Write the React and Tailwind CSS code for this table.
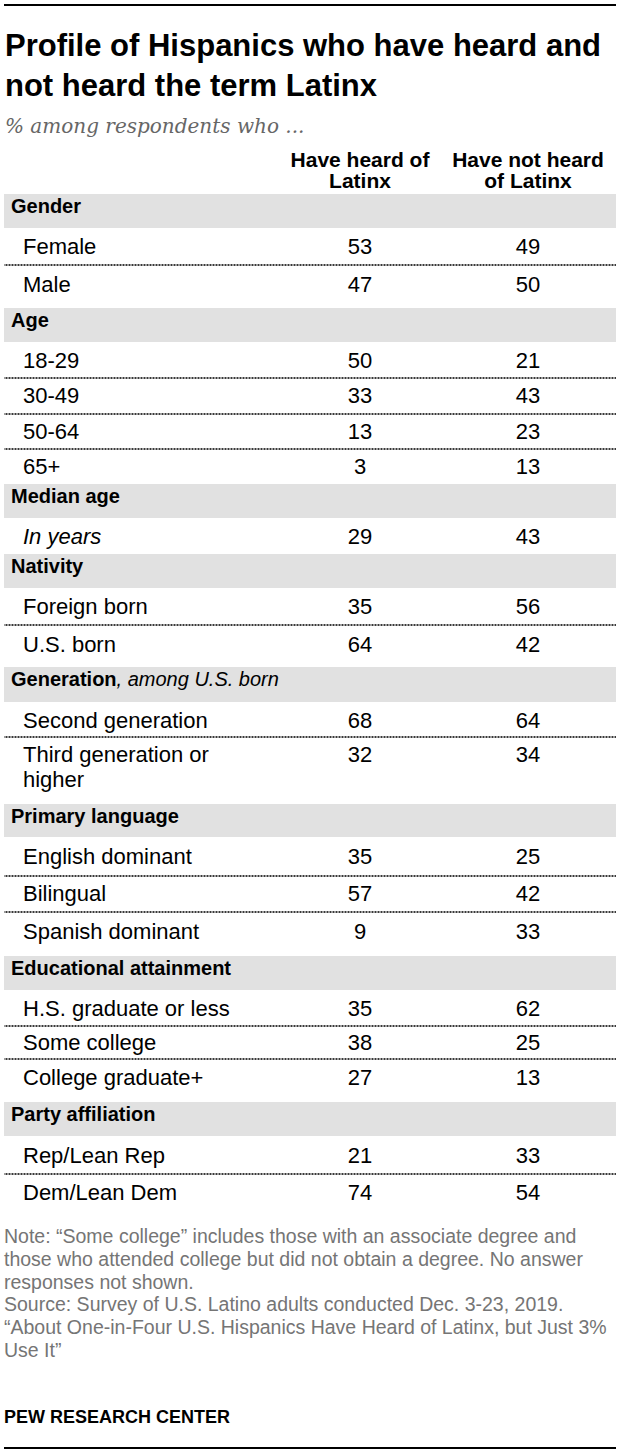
import React from 'react';

const dots =
  'bg-[linear-gradient(to_right,#3a3a3a_67%,transparent_67%)] bg-[length:3px_2px] bg-repeat-x bg-top';

// h = row height class, pt = top padding class, dotted = separator above
const sections = [
  {
    title: 'Gender',
    h: 'h-[34px]',
    rows: [
      { label: 'Female', a: 53, b: 49, h: 'h-[36px]', pt: 'pt-[6px]' },
      { label: 'Male', a: 47, b: 50, h: 'h-[44px]', pt: 'pt-[8px]', dotted: true },
    ],
  },
  {
    title: 'Age',
    h: 'h-[34px]',
    rows: [
      { label: '18-29', a: 50, b: 21, h: 'h-[35px]', pt: 'pt-[6px]' },
      { label: '30-49', a: 33, b: 43, h: 'h-[36px]', pt: 'pt-[6px]', dotted: true },
      { label: '50-64', a: 13, b: 23, h: 'h-[35px]', pt: 'pt-[6px]', dotted: true },
      { label: '65+', a: 3, b: 13, h: 'h-[36px]', pt: 'pt-[6px]', dotted: true },
    ],
  },
  {
    title: 'Median age',
    h: 'h-[34px]',
    rows: [{ label: 'In years', a: 29, b: 43, h: 'h-[36px]', pt: 'pt-[6px]', italic: true }],
  },
  {
    title: 'Nativity',
    h: 'h-[34px]',
    rows: [
      { label: 'Foreign born', a: 35, b: 56, h: 'h-[36px]', pt: 'pt-[6px]' },
      { label: 'U.S. born', a: 64, b: 42, h: 'h-[43px]', pt: 'pt-[8px]', dotted: true },
    ],
  },
  {
    title: 'Generation',
    note: ', among U.S. born',
    h: 'h-[35px]',
    rows: [
      { label: 'Second generation', a: 68, b: 64, h: 'h-[34px]', pt: 'pt-[6px]' },
      { label: 'Third generation or higher', a: 32, b: 34, h: 'h-[68px]', pt: 'pt-[6px]', dotted: true },
    ],
  },
  {
    title: 'Primary language',
    h: 'h-[33px]',
    rows: [
      { label: 'English dominant', a: 35, b: 25, h: 'h-[38px]', pt: 'pt-[7px]' },
      { label: 'Bilingual', a: 57, b: 42, h: 'h-[36px]', pt: 'pt-[6px]', dotted: true },
      { label: 'Spanish dominant', a: 9, b: 33, h: 'h-[45px]', pt: 'pt-[8px]', dotted: true },
    ],
  },
  {
    title: 'Educational attainment',
    h: 'h-[34px]',
    rows: [
      { label: 'H.S. graduate or less', a: 35, b: 62, h: 'h-[35px]', pt: 'pt-[6px]' },
      { label: 'Some college', a: 38, b: 25, h: 'h-[33px]', pt: 'pt-[5px]', dotted: true },
      { label: 'College graduate+', a: 27, b: 13, h: 'h-[44px]', pt: 'pt-[7px]', dotted: true },
    ],
  },
  {
    title: 'Party affiliation',
    h: 'h-[34px]',
    rows: [
      { label: 'Rep/Lean Rep', a: 21, b: 33, h: 'h-[37px]', pt: 'pt-[7px]' },
      { label: 'Dem/Lean Dem', a: 74, b: 54, h: 'h-[36px]', pt: 'pt-[7px]', dotted: true },
    ],
  },
];

function Row({ row }) {
  return (
    <div
      className={`grid grid-cols-[1fr_120px_120px] gap-x-[48px] pr-[28px] items-start text-[22px] leading-[25px] text-black ${row.h} ${row.pt} ${row.dotted ? dots : ''}`}
    >
      <div className={`pl-[19px] ${row.italic ? 'italic' : ''}`}>{row.label}</div>
      <div className="text-center">{row.a}</div>
      <div className="text-center">{row.b}</div>
    </div>
  );
}

export default function App() {
  return (
    <div className="w-[620px] bg-white px-[4px] pt-[4px] font-['Liberation_Sans',Arial,sans-serif] text-black">
      <div className="h-[2px] bg-black" />

      <h1 className="mt-[20px] pl-[1px] text-[31px] leading-[40px] font-bold">
        Profile of Hispanics who have heard and not heard the term Latinx
      </h1>
      <p className="mt-[8px] pl-[1px] font-['DejaVu_Serif',Georgia,serif] italic text-[20px] leading-[24px] text-[#666]">
        % among respondents who ...
      </p>

      <div className="mt-[11px] grid grid-cols-[1fr_120px_120px] gap-x-[48px] pr-[28px] text-[21px] leading-[21px] font-bold">
        <div />
        <div className="flex flex-col items-center whitespace-nowrap">
          <span>Have heard of</span>
          <span>Latinx</span>
        </div>
        <div className="flex flex-col items-center whitespace-nowrap">
          <span>Have not heard</span>
          <span>of Latinx</span>
        </div>
      </div>

      <div className="mt-[3px]">
        {sections.map((s) => (
          <div key={s.title}>
            <div className={`bg-[#e1e1e1] pl-[7px] text-[20px] leading-[24px] ${s.h}`}>
              <span className="font-bold">{s.title}</span>
              {s.note && <span className="italic">{s.note}</span>}
            </div>
            {s.rows.map((r) => (
              <Row key={r.label} row={r} />
            ))}
          </div>
        ))}
      </div>

      <div className="mt-[16px] text-[19.5px] leading-[22.8px] text-[#757575] whitespace-nowrap">
        Note: “Some college” includes those with an associate degree and
        <br />
        those who attended college but did not obtain a degree. No answer
        <br />
        responses not shown.
        <br />
        Source: Survey of U.S. Latino adults conducted Dec. 3-23, 2019.
        <br />
        “About One-in-Four U.S. Hispanics Have Heard of Latinx, but Just 3%
        <br />
        Use It”
      </div>

      <div className="mt-[44px] text-[18px] leading-[22px] font-bold">PEW RESEARCH CENTER</div>

      <div className="mt-[19px] h-[2px] bg-black" />
      <div className="h-[5px]" />
    </div>
  );
}
